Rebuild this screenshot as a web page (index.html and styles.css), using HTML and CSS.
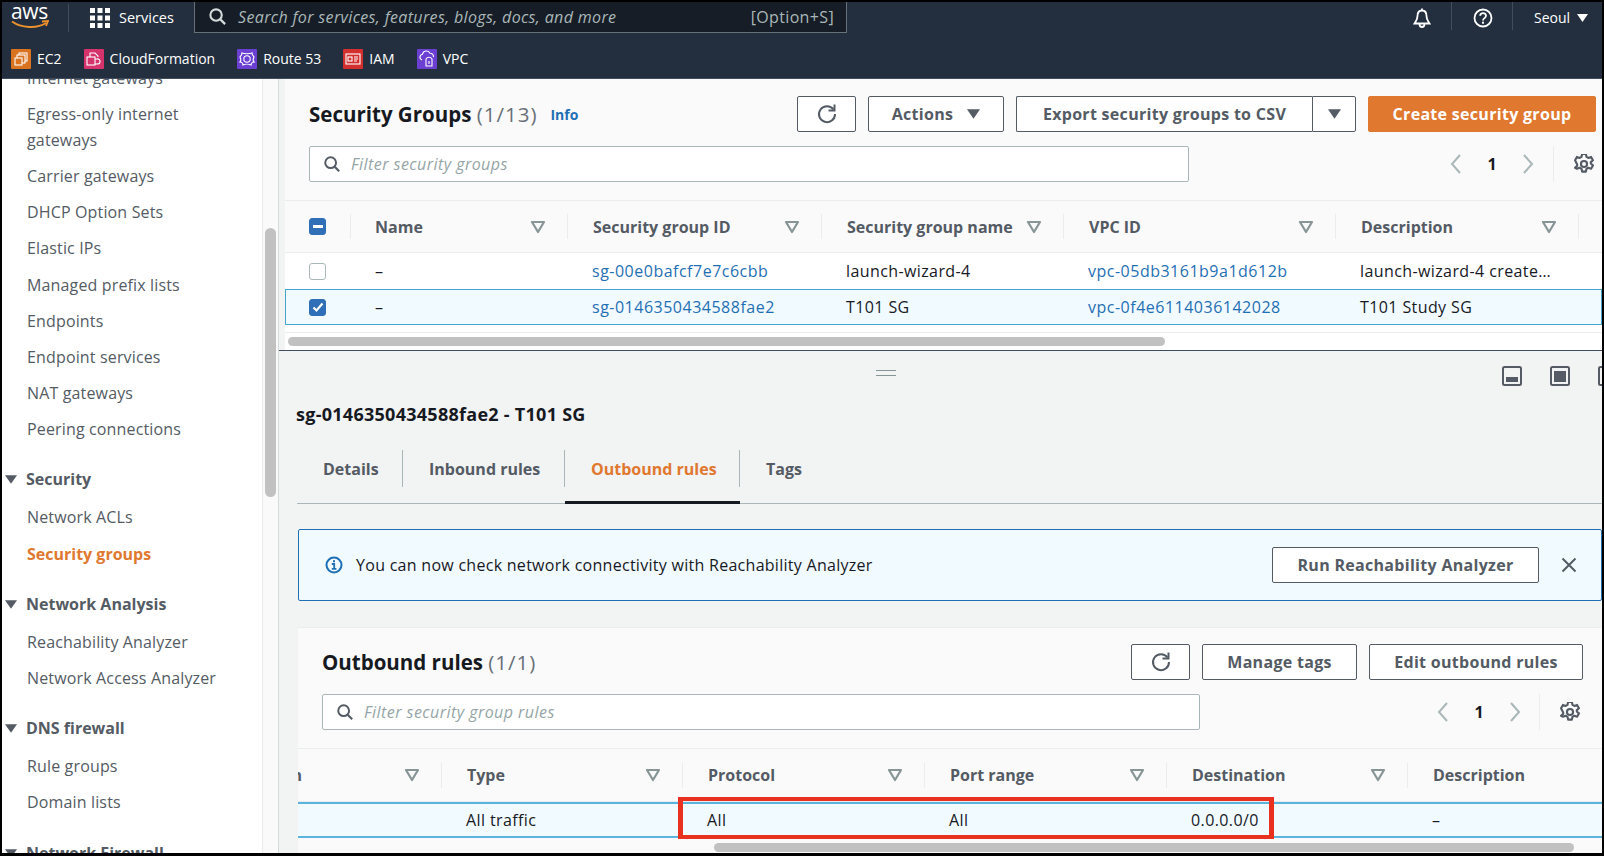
FILE: index.html
```html
<!DOCTYPE html>
<html lang="en">
<head>
<meta charset="utf-8">
<title>Security Groups</title>
<link rel="stylesheet" href="styles.css">
</head>
<body>
<svg class="defs" xmlns="http://www.w3.org/2000/svg">
  <symbol id="i-search" viewBox="0 0 20 20"><circle cx="8.5" cy="8.5" r="6" fill="none" stroke="currentColor" stroke-width="2.2"/><path d="M13 13l5 5" stroke="currentColor" stroke-width="2.4" fill="none"/></symbol>
  <symbol id="i-refresh" viewBox="0 0 22 22"><path d="M17.5 6.5A8 8 0 1 0 19 11" fill="none" stroke="currentColor" stroke-width="2"/><path d="M12.5 7.5h6v-6" fill="none" stroke="currentColor" stroke-width="2"/></symbol>
  <symbol id="i-gear" viewBox="1.5 1.5 17 17"><path d="M8.4 1.5h3.2l.5 2.4 1.6.9 2.3-.8 1.6 2.8-1.8 1.6v1.2l1.8 1.6-1.6 2.8-2.3-.8-1.6.9-.5 2.4H8.4l-.5-2.4-1.6-.9-2.3.8L2.4 13.2l1.8-1.6v-1.2L2.4 6.8 4 4l2.3.8 1.6-.9z" fill="none" stroke="currentColor" stroke-width="1.8" stroke-linejoin="round"/><circle cx="10" cy="10" r="2.6" fill="none" stroke="currentColor" stroke-width="1.8"/></symbol>
  <symbol id="i-filter" viewBox="0 0 16 14"><path d="M2 2h12L8 12z" fill="none" stroke="currentColor" stroke-width="2.2" stroke-linejoin="round"/></symbol>
  <symbol id="i-left" viewBox="0 0 14 22"><path d="M11 2L3 11l8 9" fill="none" stroke="currentColor" stroke-width="2"/></symbol>
  <symbol id="i-right" viewBox="0 0 14 22"><path d="M3 2l8 9-8 9" fill="none" stroke="currentColor" stroke-width="2"/></symbol>
  <symbol id="i-tri" viewBox="0 0 14 10"><path d="M0 0h14L7 10z" fill="currentColor"/></symbol>
  <symbol id="i-pane-bottom" viewBox="0 0 20 20"><rect x="1" y="1" width="18" height="18" rx="1.5" fill="none" stroke="currentColor" stroke-width="2"/><rect x="4" y="11" width="12" height="5" fill="currentColor"/></symbol>
  <symbol id="i-pane-full" viewBox="0 0 20 20"><rect x="1" y="1" width="18" height="18" rx="1.5" fill="none" stroke="currentColor" stroke-width="2"/><rect x="4" y="5" width="12" height="11" fill="currentColor"/></symbol>
</svg>
<div class="app">
  <header class="topnav">
    <div class="logo">
      <span class="logo-text">aws</span>
      <svg class="logo-smile" viewBox="0 0 38 10"><path d="M1 1.5C10 8 26 9 35 3" fill="none" stroke="#ec912d" stroke-width="2"/><path d="M31 1.5l6-.5-2 5" fill="none" stroke="#ec912d" stroke-width="1.8"/></svg>
    </div>
    <div class="nav-sep"></div>
    <div class="services">
      <svg class="apps" viewBox="0 0 20 20"><g fill="#fff"><rect width="5" height="5"/><rect x="7.5" width="5" height="5"/><rect x="15" width="5" height="5"/><rect y="7.5" width="5" height="5"/><rect x="7.5" y="7.5" width="5" height="5"/><rect x="15" y="7.5" width="5" height="5"/><rect y="15" width="5" height="5"/><rect x="7.5" y="15" width="5" height="5"/><rect x="15" y="15" width="5" height="5"/></g></svg>
      <span>Services</span>
    </div>
    <div class="search">
      <svg class="search-icon"><use href="#i-search"/></svg>
      <span class="search-text">Search for services, features, blogs, docs, and more</span>
      <span class="search-key">[Option+S]</span>
    </div>
    <div class="nav-right">
      <svg class="bell" viewBox="0 0 20 22"><path d="M10 1.5v2M10 3.5c-3.200 0-4.500 2.500-4.500 5.500 0 3.500-1.500 5-3 7.500h15c-1.500-2.500-3-4-3-7.500 0-3-1.300-5.500-4.500-5.500z" fill="none" stroke="#fff" stroke-width="1.800"/><path d="M7.500 17c0 4 5 4 5 0" fill="none" stroke="#fff" stroke-width="1.800"/></svg>
      <div class="nav-sep sep-bell"></div>
      <svg class="help" viewBox="0 0 20 20"><circle cx="10" cy="10" r="8.500" fill="none" stroke="#fff" stroke-width="1.800"/><path d="M7.200 7.800c0-3.600 5.800-3.600 5.800 0 0 2.400-3 2.200-3 4.700" fill="none" stroke="#fff" stroke-width="1.800"/><rect x="9" y="13.700" width="2" height="2" fill="#fff"/></svg>
      <div class="nav-sep sep-help"></div>
      <span class="region">Seoul</span>
      <svg class="region-caret"><use href="#i-tri"/></svg>
    </div>
  </header>

  <nav class="favbar">
    <a class="fav"><svg class="fav-icon" viewBox="0 0 20 20"><rect width="20" height="20" fill="#d9731f"/><g fill="none" stroke="#fff" stroke-width="1.100"><rect x="8" y="4" width="8" height="8"/><rect x="6" y="6" width="8" height="8" fill="#d9731f"/><rect x="4" y="9" width="7" height="7" fill="#d9731f"/></g></svg>EC2</a>
    <a class="fav"><svg class="fav-icon" viewBox="0 0 20 20"><rect width="20" height="20" fill="#d6336c"/><g fill="none" stroke="#fff" stroke-width="1.100"><path d="M6 8V4h5l3 3v1"/><rect x="3" y="8" width="8" height="8"/><path d="M11 10h2a2.500 2.500 0 0 1 3 3c0 1-1 2-3 2h-2"/></g></svg>CloudFormation</a>
    <a class="fav"><svg class="fav-icon" viewBox="0 0 20 20"><rect width="20" height="20" fill="#6a3fd1"/><g fill="none" stroke="#fff" stroke-width="1.100"><path d="M5 4c2 1 8 1 10 0 0 2 1 3 2 4-1 2-1 4 0 5-2 0-3 2-3 3-2-1-6-1-8 0 0-1-1-3-3-3 1-1 1-3 0-5 1-1 2-2 2-4z"/><circle cx="10" cy="10" r="3.200"/></g></svg>Route 53</a>
    <a class="fav"><svg class="fav-icon" viewBox="0 0 20 20"><rect width="20" height="20" fill="#d32f2f"/><g fill="none" stroke="#fff" stroke-width="1.100"><rect x="3" y="5" width="14" height="10"/><rect x="5" y="8" width="4" height="4"/><path d="M11 8h4M11 10h4M11 12h3"/></g></svg>IAM</a>
    <a class="fav"><svg class="fav-icon" viewBox="0 0 20 20"><rect width="20" height="20" fill="#6a3fd1"/><g fill="none" stroke="#fff" stroke-width="1.100"><path d="M5 11a3 3 0 0 1 .500-5.800 4 4 0 0 1 7.500-1 3.500 3.500 0 0 1 3.500 4"/><path d="M9 10a3.500 3.500 0 0 1 6 0v7H9z"/><path d="M12 12v3"/></g></svg>VPC</a>
  </nav>

  <div class="body">
    <aside class="sidebar">
      <ul class="side-list">
        <li class="side-item">Internet gateways</li>
        <li class="side-item">Egress-only internet gateways</li>
        <li class="side-item">Carrier gateways</li>
        <li class="side-item">DHCP Option Sets</li>
        <li class="side-item">Elastic IPs</li>
        <li class="side-item">Managed prefix lists</li>
        <li class="side-item">Endpoints</li>
        <li class="side-item">Endpoint services</li>
        <li class="side-item">NAT gateways</li>
        <li class="side-item">Peering connections</li>
        <li class="side-head"><svg class="side-tri"><use href="#i-tri"/></svg>Security</li>
        <li class="side-item">Network ACLs</li>
        <li class="side-item side-active">Security groups</li>
        <li class="side-head"><svg class="side-tri"><use href="#i-tri"/></svg>Network Analysis</li>
        <li class="side-item">Reachability Analyzer</li>
        <li class="side-item">Network Access Analyzer</li>
        <li class="side-head"><svg class="side-tri"><use href="#i-tri"/></svg>DNS firewall</li>
        <li class="side-item">Rule groups</li>
        <li class="side-item">Domain lists</li>
        <li class="side-head"><svg class="side-tri"><use href="#i-tri"/></svg>Network Firewall</li>
      </ul>
    </aside>
    <div class="side-track"><div class="side-thumb"></div></div>

    <main class="main">
      <section class="top-panel">
        <div class="head-row">
          <h1 class="title">Security Groups <span class="count">(1/13)</span></h1>
          <a class="info">Info</a>
          <div class="actions">
            <button class="btn btn-icon"><svg class="ic-refresh"><use href="#i-refresh"/></svg></button>
            <button class="btn btn-actions">Actions<svg class="btn-tri"><use href="#i-tri"/></svg></button>
            <div class="split">
              <button class="btn split-main">Export security groups to CSV</button>
              <button class="btn split-caret"><svg class="btn-tri"><use href="#i-tri"/></svg></button>
            </div>
            <button class="btn btn-primary">Create security group</button>
          </div>
        </div>
        <div class="filter-row">
          <div class="filter filter-top"><svg class="filter-icon"><use href="#i-search"/></svg><span>Filter security groups</span></div>
          <div class="pager">
            <svg class="pg-arrow"><use href="#i-left"/></svg><span class="pg-num">1</span><svg class="pg-arrow"><use href="#i-right"/></svg>
            <div class="pg-sep"></div>
            <svg class="pg-gear"><use href="#i-gear"/></svg>
          </div>
        </div>
        <div class="table table-sg">
          <div class="t-row t-head">
            <div class="t-cell t-check"><span class="cb cb-on"><i class="cb-dash"></i></span></div>
            <div class="t-cell"><span>Name</span><svg class="t-caret"><use href="#i-filter"/></svg></div>
            <div class="t-cell"><span>Security group ID</span><svg class="t-caret"><use href="#i-filter"/></svg></div>
            <div class="t-cell"><span>Security group name</span><svg class="t-caret"><use href="#i-filter"/></svg></div>
            <div class="t-cell"><span>VPC ID</span><svg class="t-caret"><use href="#i-filter"/></svg></div>
            <div class="t-cell"><span>Description</span><svg class="t-caret"><use href="#i-filter"/></svg></div>
          </div>
          <div class="t-row t-body">
            <div class="b-check"><span class="cb"></span></div>
            <div class="b-cell">–</div>
            <div class="b-cell link">sg-00e0bafcf7e7c6cbb</div>
            <div class="b-cell">launch-wizard-4</div>
            <div class="b-cell link">vpc-05db3161b9a1d612b</div>
            <div class="b-cell">launch-wizard-4 create…</div>
          </div>
          <div class="t-row t-body t-selected">
            <div class="b-check"><span class="cb cb-on"><svg class="cb-tick" viewBox="0 0 12 12"><path d="M1.500 6.500l3 3 6-7" fill="none" stroke="#fff" stroke-width="2.200"/></svg></span></div>
            <div class="b-cell">–</div>
            <div class="b-cell link">sg-0146350434588fae2</div>
            <div class="b-cell">T101 SG</div>
            <div class="b-cell link">vpc-0f4e6114036142028</div>
            <div class="b-cell">T101 Study SG</div>
          </div>
          <div class="t-gap"></div>
          <div class="t-foot"><div class="hbar hbar-sg"></div></div>
        </div>
      </section>

      <section class="lower">
        <div class="pane-tools">
          <div class="handle"></div>
          <svg class="pane-ic"><use href="#i-pane-bottom"/></svg>
          <svg class="pane-ic"><use href="#i-pane-full"/></svg>
          <svg class="pane-ic"><use href="#i-pane-full"/></svg>
        </div>
        <h2 class="detail-title">sg-0146350434588fae2 - T101 SG</h2>
        <div class="tabs">
          <div class="tab tab-details"><span class="tab-label">Details</span></div>
          <div class="tab tab-inbound"><span class="tab-label">Inbound rules</span></div>
          <div class="tab tab-outbound tab-active"><span class="tab-label">Outbound rules</span></div>
          <div class="tab tab-tags"><span class="tab-label tab-last">Tags</span></div>
        </div>
        <div class="flash">
          <svg class="flash-icon" viewBox="0 0 18 18"><circle cx="9" cy="9" r="7.500" fill="none" stroke="#1f6fb5" stroke-width="2"/><rect x="8" y="4.200" width="2" height="2" fill="#1f6fb5"/><path d="M6.800 8h2.400v4.500M6.800 12.800h4.600" fill="none" stroke="#1f6fb5" stroke-width="1.800"/></svg>
          <span class="flash-text">You can now check network connectivity with Reachability Analyzer</span>
          <button class="btn btn-run">Run Reachability Analyzer</button>
          <svg class="flash-x" viewBox="0 0 16 16"><path d="M1.500 1.500l13 13M14.500 1.500l-13 13" stroke="#545b64" stroke-width="2" fill="none"/></svg>
        </div>
        <div class="card">
          <div class="card-head">
            <div class="head-row">
              <h2 class="title">Outbound rules <span class="count">(1/1)</span></h2>
              <div class="actions">
                <button class="btn btn-icon"><svg class="ic-refresh"><use href="#i-refresh"/></svg></button>
                <button class="btn btn-tags">Manage tags</button>
                <button class="btn btn-edit">Edit outbound rules</button>
              </div>
            </div>
            <div class="filter-row">
              <div class="filter filter-rules"><svg class="filter-icon"><use href="#i-search"/></svg><span>Filter security group rules</span></div>
              <div class="pager pager-low">
                <svg class="pg-arrow"><use href="#i-left"/></svg><span class="pg-num">1</span><svg class="pg-arrow"><use href="#i-right"/></svg>
                <div class="pg-sep"></div>
                <svg class="pg-gear"><use href="#i-gear"/></svg>
              </div>
            </div>
          </div>
          <div class="table table-rules">
            <div class="t-row t-head">
              <div class="t-cell t-clip"><span class="clip-text">IP version</span><svg class="t-caret"><use href="#i-filter"/></svg></div>
              <div class="t-cell"><span>Type</span><svg class="t-caret"><use href="#i-filter"/></svg></div>
              <div class="t-cell"><span>Protocol</span><svg class="t-caret"><use href="#i-filter"/></svg></div>
              <div class="t-cell"><span>Port range</span><svg class="t-caret"><use href="#i-filter"/></svg></div>
              <div class="t-cell"><span>Destination</span><svg class="t-caret"><use href="#i-filter"/></svg></div>
              <div class="t-cell t-open"><span>Description</span></div>
            </div>
            <div class="t-row t-body t-selected">
              <div class="b-cell"></div>
              <div class="b-cell">All traffic</div>
              <div class="b-cell">All</div>
              <div class="b-cell">All</div>
              <div class="b-cell">0.0.0.0/0</div>
              <div class="b-cell">–</div>
            </div>
            <div class="hbar hbar-rules"></div>
            <div class="red-box"></div>
          </div>
        </div>
      </section>
    </main>
  </div>
</div>
</body>
</html>
```

FILE: styles.css
```css
* { box-sizing: border-box; }
html, body { margin: 0; padding: 0; }
body { font-family: "Open Sans", "Liberation Sans", sans-serif; font-size: 16px; color: #16191f; background: #000; overflow: hidden; }
.defs { position: absolute; width: 0; height: 0; }
svg { display: block; flex: none; }
ul { list-style: none; margin: 0; padding: 0; }
h1, h2 { margin: 0; }

.app { width: 1604px; height: 856px; border: 2px solid #000; border-bottom-width: 3px; display: flex; flex-direction: column; overflow: hidden; background: #f2f3f3; }

/* top nav */
.topnav { height: 38px; flex: none; background: #232f3e; display: flex; color: #fff; }
.logo { width: 66px; padding: 0 0 0 9px; }
.logo-text { display: block; font-size: 21px; line-height: 18px; letter-spacing: -0.3px; color: #fff; }
.logo-smile { width: 38px; height: 10px; }
.nav-sep { width: 1px; height: 28px; background: #414d5c; margin-top: 2px; flex: none; }
.services { width: 125px; display: flex; align-items: center; height: 31px; padding-left: 21px; font-size: 14.5px; }
.apps { width: 20px; height: 20px; margin-right: 9px; }
.search { width: 653px; height: 32px; margin-top: -1px; background: #161d26; border: 1px solid #687078; border-top: 0; display: flex; align-items: center; padding: 0 12px 0 13px; }
.search-icon { width: 19px; height: 19px; color: #d5dbdb; margin-right: 11px; }
.search-text { font-style: italic; font-size: 16px; letter-spacing: .35px; color: #aab7b8; flex: 1; white-space: nowrap; }
.search-key { color: #aab7b8; font-size: 16px; letter-spacing: .35px; }
.nav-right { flex: 1; display: flex; height: 31px; align-items: center; padding-left: 565px; }
.bell { width: 20px; height: 22px; }
.sep-bell, .sep-help { margin: 0 21px 0 19px; align-self: flex-start; }
.help { width: 20px; height: 20px; }
.region { font-size: 14px; }
.region-caret { width: 11px; height: 8px; color: #fff; margin-left: 7px; }

/* favorites */
.favbar { height: 39px; flex: none; background: #232f3e; border-bottom: 1px solid #414d5c; display: flex; align-items: center; padding: 0 0 1px 9px; gap: 22px; }
.fav { display: flex; align-items: center; color: #fff; font-size: 14px; gap: 6px; }
.fav-icon { width: 20px; height: 20px; border-radius: 1px; }

.body { flex: 1; display: flex; min-height: 0; }

/* sidebar */
.sidebar { width: 260px; flex: none; background: #fff; overflow: hidden; color: #545b64; }
.side-list { margin-top: -19.5px; }
.side-item { padding: 5.1px 20px 5.1px 25px; line-height: 26px; font-size: 16px; letter-spacing: .15px; }
.side-active { color: #e0782f; font-weight: 700; letter-spacing: 0; }
.side-head { position: relative; margin-top: 15px; height: 37px; line-height: 35px; padding-left: 24px; font-size: 16px; font-weight: 700; color: #545b64; }
.side-tri { position: absolute; left: 3px; top: 13px; width: 12px; height: 9px; color: #545b64; }
.side-track { width: 17px; flex: none; background: #fafafa; border-left: 1px solid #eaeded; border-right: 1px solid #d5dbdb; padding: 149px 2px 0 2px; }
.side-thumb { width: 11px; height: 269px; background: #c1c1c1; border-radius: 6px; }

/* main */
.main { flex: 1; min-width: 0; display: flex; flex-direction: column; }
.top-panel { height: 271px; flex: none; margin-left: 6px; background: #fafafa; padding-top: 17px; }
.head-row { display: flex; align-items: center; height: 36px; padding-left: 24px; padding-right: 6px; }
.title { font-size: 20.5px; font-weight: 700; color: #16191f; line-height: 36px; white-space: nowrap; }
.count { font-weight: 400; color: #687078; letter-spacing: 1px; }
.info { color: #1f6fb5; font-weight: 700; font-size: 14px; margin-left: 13px; }
.actions { margin-left: auto; display: flex; gap: 12px; }
.btn { height: 36px; border: 1px solid #545b64; border-radius: 2px; background: #fff; color: #545b64; font: 700 16px "Open Sans", "Liberation Sans", sans-serif; letter-spacing: .3px; padding: 0; display: flex; align-items: center; justify-content: center; }
.btn-icon { width: 59px; }
.ic-refresh { width: 22px; height: 22px; color: #545b64; }
.btn-actions { width: 136px; gap: 14px; }
.btn-tri { width: 13px; height: 10px; color: #545b64; }
.split { display: flex; }
.split-main { width: 296px; border-right: 0; border-radius: 2px 0 0 2px; }
.split-caret { width: 44px; border-radius: 0 2px 2px 0; border-left: 1px solid #545b64; }
.btn-primary { width: 228px; background: #e0782f; border-color: #e0782f; color: #fff; }

.filter-row { display: flex; align-items: center; margin-top: 14px; padding-left: 24px; }
.filter { height: 36px; border: 1px solid #aab7b8; border-radius: 2px; background: #fff; display: flex; align-items: center; padding-left: 13px; font-style: italic; font-size: 16px; letter-spacing: .45px; color: #95a5a6; }
.filter-top { width: 880px; }
.filter-rules { width: 878px; }
.filter-icon { width: 18px; height: 18px; color: #545b64; margin-right: 10px; }
.pager { margin-left: auto; display: flex; align-items: center; height: 36px; padding-right: 5px; }
.pg-arrow { width: 36px; height: 22px; color: #aab7b8; }
.pg-num { width: 36px; text-align: center; font-weight: 700; font-size: 16px; color: #16191f; }
.pg-sep { width: 1px; height: 36px; background: #eaeded; margin-left: 7px; }
.pager-low .pg-sep { margin-left: 6px; }
.pg-gear { width: 20px; height: 20px; color: #545b64; margin-left: 20px; margin-right: 3px; }

/* tables */
.table { position: relative; border-top: 1px solid #eaeded; margin-top: 18px; }
.t-row { display: grid; }
.table-sg .t-row { grid-template-columns: 66px 217px 254px 242px 272px 243px 1fr; }
.table-rules .t-row { grid-template-columns: 144px 241px 242px 242px 241px 1fr; }
.t-head { height: 52px; align-items: center; border-bottom: 1px solid #eaeded; }
.t-cell { height: 25px; display: flex; align-items: center; justify-content: space-between; padding: 0 21px 0 25px; border-right: 1px solid #eaeded; font-weight: 700; font-size: 16px; color: #545b64; white-space: nowrap; overflow: hidden; }
.t-check { padding: 0 0 0 24px; }
.t-check + .t-cell { padding-left: 24px; }
.t-open { border-right: 0; }
.t-clip { padding-left: 0; }
.clip-text { width: 4px; overflow: hidden; direction: rtl; }
.t-caret { width: 16px; height: 14px; color: #879596; }
.t-body { height: 36px; align-items: center; background: #fff; }
.b-cell { padding-left: 24px; font-size: 16px; letter-spacing: .4px; color: #16191f; white-space: nowrap; overflow: hidden; }
.b-check { padding-left: 24px; }
.link { color: #1f6fb5; letter-spacing: .5px; }
.t-selected { background: #f1faff; }
.table-sg .t-selected { box-shadow: inset 0 0 0 1px #44a5d0; }
.table-rules .t-selected { box-shadow: inset 0 2px 0 #5ab4dc, inset 0 -2px 0 #5ab4dc; }
.cb { display: flex; align-items: center; justify-content: center; width: 17px; height: 17px; border: 1px solid #aab7b8; border-radius: 3px; background: #fff; }
.cb-on { background: #2e6fb7; border-color: #2e6fb7; }
.cb-dash { width: 10px; height: 2.500px; background: #fff; }
.cb-tick { width: 12px; height: 12px; }
.t-gap { height: 8px; background: #fff; border-bottom: 1px solid #eaeded; }
.t-foot { height: 17px; background: #fff; padding-top: 4px; }
.hbar { height: 9px; background: #c1c1c1; border-radius: 5px; }
.hbar-sg { width: 877px; margin-left: 3px; }
.hbar-rules { width: 860px; margin: 5px 0 0 416px; }

/* lower pane */
.lower { flex: 1; min-height: 0; border-top: 1px solid #414d5c; background: #f2f3f3; overflow: hidden; }
.pane-tools { display: flex; align-items: flex-start; padding-top: 15px; height: 35px; gap: 28px; }
.handle { flex: none; width: 20px; height: 6px; margin: 4px 578px 0 597px; border-top: 1px solid #879596; border-bottom: 1px solid #879596; }
.pane-ic { width: 20px; height: 20px; color: #545b64; }
.detail-title { font-size: 18px; letter-spacing: .27px; font-weight: 700; line-height: 20px; margin: 18px 0 0 17px; color: #16191f; }
.tabs { display: flex; margin: 26px 0 0 18px; height: 54px; border-bottom: 1px solid #aab7b8; }
.tab { height: 54px; }
.tab-details { width: 106px; }
.tab-inbound { width: 162px; }
.tab-outbound { width: 175px; }
.tab-label { display: flex; align-items: center; height: 37px; padding-left: 26px; border-right: 1px solid #aab7b8; font-weight: 700; font-size: 16px; color: #545b64; }
.tab-last { border-right: 0; }
.tab-active { border-bottom: 3px solid #16191f; }
.tab-active .tab-label { color: #e0782f; }
.flash { height: 72px; margin: 25px 0 0 19px; background: #f1faff; border: 1px solid #1f6fb5; border-radius: 2px; display: flex; align-items: center; padding: 0 24px 0 26px; }
.flash-icon { width: 18px; height: 18px; margin-right: 13px; }
.flash-text { flex: 1; font-size: 16px; letter-spacing: .28px; color: #16191f; }
.btn-run { width: 267px; }
.flash-x { width: 16px; height: 16px; margin-left: 22px; }
.card { margin: 26px 0 0 19px; height: 230px; background: #fafafa; border-top: 1px solid #eaeded; }
.card-head { padding-top: 16px; }
.card-head .head-row { padding-right: 19px; }
.btn-tags { width: 155px; }
.btn-edit { width: 214px; }
.card-head .pager { padding-right: 19px; }
.table-rules { margin-top: 18px; }
.table-rules .t-head { height: 53px; }
.red-box { position: absolute; left: 380px; top: 48px; width: 596px; height: 42px; border: solid #e8321f; border-width: 4px 5px; }
```
